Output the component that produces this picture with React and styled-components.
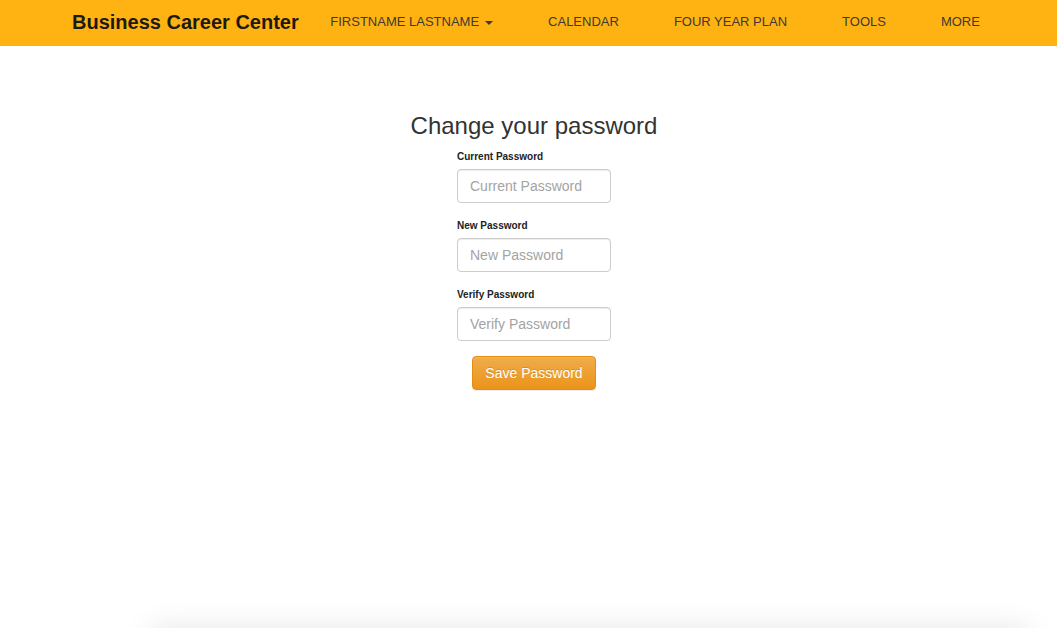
import React from "react";
import styled, { createGlobalStyle } from "styled-components";

const GlobalStyle = createGlobalStyle`
  html, body {
    margin: 0;
    padding: 0;
    overflow: hidden;
    background: #fff;
  }
  body {
    font-family: "Liberation Sans", Arial, Helvetica, sans-serif;
    font-size: 14px;
    line-height: 1.42857;
    color: #333;
  }
  * { box-sizing: border-box; }
`;

const Page = styled.div`
  height: 628px;
  overflow: hidden;
  display: flex;
  flex-direction: column;
`;

const NavBar = styled.header`
  height: 46px;
  flex: none;
  background: #ffb312;
  display: flex;
  align-items: flex-start;
  padding: 12px 0 0 72px;
`;

const Brand = styled.a`
  font-size: 20px;
  line-height: 20px;
  font-weight: 700;
  color: #1c1a14;
  text-decoration: none;
  padding-right: 4px;
  white-space: nowrap;
`;

const NavList = styled.nav`
  display: flex;
`;

const NavLink = styled.a`
  font-size: 13px;
  line-height: 20px;
  color: #3d3a33;
  text-decoration: none;
  padding: 0 27.5px;
  white-space: nowrap;
  display: flex;
  align-items: center;
`;

const Caret = styled.span`
  display: inline-block;
  width: 0;
  height: 0;
  margin-left: 6px;
  margin-top: 2px;
  border-top: 4px solid #3d3a33;
  border-left: 4px solid transparent;
  border-right: 4px solid transparent;
`;

const Main = styled.main`
  flex: none;
  min-height: 582px;
  padding: 67px 0 0 11px;
  display: flex;
  flex-direction: column;
  align-items: center;
`;

const Title = styled.h1`
  margin: 0 0 10px;
  font-size: 24px;
  line-height: 26.4px;
  font-weight: 400;
  color: #333;
`;

const Form = styled.form`
  width: 154px;
  display: flex;
  flex-direction: column;
  gap: 15px;
`;

const Group = styled.div`
  display: flex;
  flex-direction: column;
`;

const Label = styled.label`
  font-size: 10px;
  line-height: 14px;
  font-weight: 700;
  color: #222;
  padding-top: 1px;
  margin-bottom: 5px;
`;

const Input = styled.input`
  width: 154px;
  height: 34px;
  padding: 6px 12px;
  font-family: inherit;
  font-size: 14px;
  line-height: 20px;
  color: #555;
  background: #fff;
  border: 1px solid #ccc;
  border-radius: 4px;
  box-shadow: inset 0 1px 1px rgba(0, 0, 0, 0.075);
  outline: none;
  &::placeholder {
    color: #a3a3a3;
  }
`;

const SaveButton = styled.button`
  align-self: center;
  height: 34px;
  padding: 6px 12px;
  font-family: inherit;
  font-size: 14px;
  line-height: 20px;
  color: #fff;
  background: linear-gradient(to bottom, #f0ac4b 0%, #eb9419 100%);
  border: 1px solid #e38d13;
  border-radius: 4px;
  text-shadow: 0 -1px 0 rgba(0, 0, 0, 0.15);
  box-shadow: inset 0 1px 0 rgba(255, 255, 255, 0.15), 0 1px 1px rgba(0, 0, 0, 0.075);
  cursor: pointer;
`;

const Footer = styled.footer`
  flex: none;
  margin-left: 150px;
  width: 880px;
  height: 120px;
  background: #fff;
  border-radius: 8px;
  box-shadow: 0 0 30px rgba(0, 0, 0, 0.1);
`;

const fields = [
  { id: "current", label: "Current Password" },
  { id: "new", label: "New Password" },
  { id: "verify", label: "Verify Password" },
];

const navItems = ["CALENDAR", "FOUR YEAR PLAN", "TOOLS", "MORE"];

export default function App() {
  return (
    <>
      <GlobalStyle />
      <Page>
        <NavBar>
          <Brand href="#">Business Career Center</Brand>
          <NavList>
            <NavLink href="#">
              FIRSTNAME LASTNAME
              <Caret />
            </NavLink>
            {navItems.map((item) => (
              <NavLink href="#" key={item}>
                {item}
              </NavLink>
            ))}
          </NavList>
        </NavBar>
        <Main>
          <Title>Change your password</Title>
          <Form onSubmit={(e) => e.preventDefault()}>
            {fields.map((f) => (
              <Group key={f.id}>
                <Label htmlFor={f.id}>{f.label}</Label>
                <Input id={f.id} type="password" placeholder={f.label} />
              </Group>
            ))}
            <SaveButton type="submit">Save Password</SaveButton>
          </Form>
        </Main>
        <Footer />
      </Page>
    </>
  );
}
